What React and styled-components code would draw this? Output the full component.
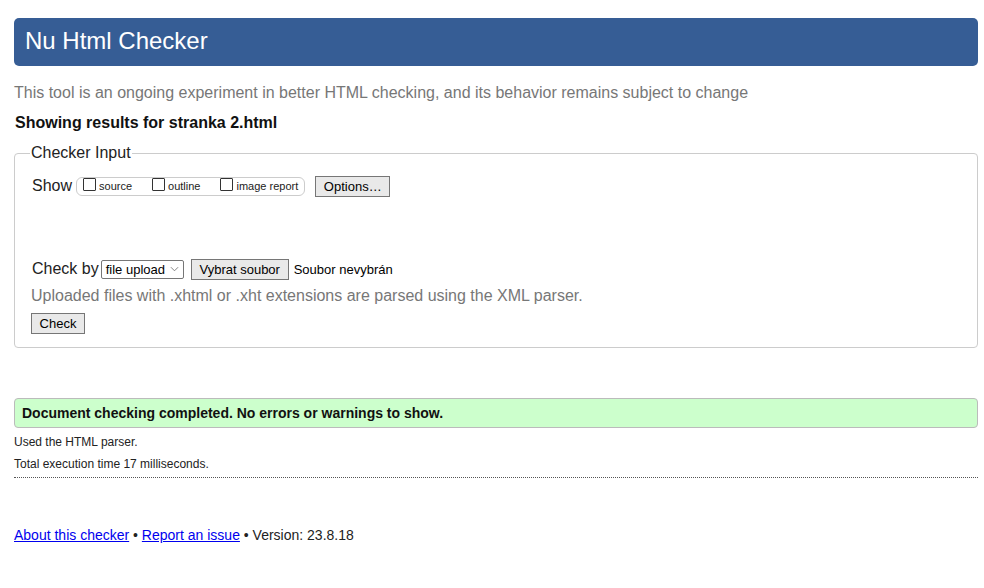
import React from "react";
import styled, { createGlobalStyle } from "styled-components";

const GlobalStyle = createGlobalStyle`
  body {
    margin: 0;
    background: #fff;
    font-family: "Liberation Sans", Arial, sans-serif;
    color: #000;
  }
`;

function App() {
  return (
    <Page>
      <GlobalStyle />
      <Header>
        <Title>Nu Html Checker</Title>
      </Header>
      <Intro>
        This tool is an ongoing experiment in better HTML checking, and its
        behavior remains subject to change
      </Intro>
      <ResultsFor>Showing results for stranka 2.html</ResultsFor>
      <Fieldset>
        <Legend>Checker Input</Legend>
        <Row>
          <RowLabel $mr={4}>Show</RowLabel>
          <CheckGroup>
            <CheckItem $gap={20}>
              <Box />
              source
            </CheckItem>
            <CheckItem $gap={20}>
              <Box />
              outline
            </CheckItem>
            <CheckItem $gap={6}>
              <Box />
              image report
            </CheckItem>
          </CheckGroup>
          <Button $w={75}>Options…</Button>
        </Row>
        <CheckByRow>
          <RowLabel $mr={2}>Check by</RowLabel>
          <Select>
            file upload
            <Chevron viewBox="0 0 10 6" width="9" height="6">
              <path d="M1 1 L5 5 L9 1" fill="none" stroke="#767676" strokeWidth="1" />
            </Chevron>
          </Select>
          <Button $w={98} $ml={7}>Vybrat soubor</Button>
          <FileName>Soubor nevybrán</FileName>
        </CheckByRow>
        <Hint>Uploaded files with .xhtml or .xht extensions are parsed using the XML parser.</Hint>
        <Button $w={54}>Check</Button>
      </Fieldset>
      <Success>Document checking completed. No errors or warnings to show.</Success>
      <Small $top={3}>Used the HTML parser.</Small>
      <Small>Total execution time 17 milliseconds.</Small>
      <Divider />
      <Footer>
        <Link href="#">About this checker</Link> • <Link href="#">Report an issue</Link> •
        Version: 23.8.18
      </Footer>
    </Page>
  );
}

export default App;

const Page = styled.div`
  padding: 18px 6px 0 14px;
  width: 964px;
`;

const Header = styled.div`
  background: #365d95;
  border-radius: 5px;
  height: 48px;
  display: flex;
  align-items: center;
  padding-left: 11px;
`;

const Title = styled.h1`
  margin: 0;
  color: #fff;
  font-weight: normal;
  font-size: 24px;
  line-height: 1;
  position: relative;
  top: -1px;
`;

const Intro = styled.p`
  margin: 17px 0 0;
  color: #777;
  font-size: 16px;
  line-height: 20px;
`;

const ResultsFor = styled.h2`
  margin: 10px 0 0 1px;
  font-size: 16px;
  font-weight: bold;
  line-height: 20px;
  color: #111;
`;

const Fieldset = styled.fieldset`
  margin: 11px 0 0;
  border: 1px solid #ccc;
  border-radius: 4px;
  padding: 13px 16px 13px 16px;
  min-width: 0;
`;

const Legend = styled.legend`
  font-size: 16px;
  color: #222;
  padding: 0 1px;
  margin-left: -1px;
`;

const Row = styled.div`
  display: flex;
  align-items: center;
  height: 22px;
`;

const CheckByRow = styled(Row)`
  margin-top: 61px;
`;

const RowLabel = styled.span`
  font-size: 16px;
  color: #222;
  padding-left: 1px;
  margin-right: ${(p) => p.$mr}px;
`;

const CheckGroup = styled.div`
  display: flex;
  align-items: center;
  height: 17px;
  border: 1px solid #ccc;
  border-radius: 6px;
  padding: 0 0 0 6px;
  margin-right: 10px;
`;

const CheckItem = styled.label`
  display: flex;
  align-items: center;
  font-size: 11px;
  color: #222;
  margin-right: ${(p) => p.$gap}px;
`;

const Box = styled.span`
  width: 11px;
  height: 11px;
  border: 1px solid #333;
  border-radius: 1px;
  margin-right: 3px;
  position: relative;
  top: -2px;
`;

const Button = styled.button`
  width: ${(p) => p.$w}px;
  margin-left: ${(p) => p.$ml || 0}px;
  height: 21px;
  padding: 0;
  border: 1px solid #767676;
  background: #e9e9e9;
  border-radius: 0;
  font-family: "Liberation Sans", Arial, sans-serif;
  font-size: 13px;
  color: #000;
`;

const Select = styled.div`
  display: flex;
  align-items: center;
  justify-content: space-between;
  box-sizing: border-box;
  width: 83px;
  height: 19px;
  border: 1px solid #767676;
  border-radius: 2px;
  padding: 0 4px 0 4px;
  font-size: 13px;
  color: #000;
`;

const Chevron = styled.svg`
  display: block;
`;

const FileName = styled.span`
  font-size: 13px;
  margin-left: 5px;
  color: #000;
`;

const Hint = styled.p`
  margin: 6px 0 7px;
  color: #777;
  font-size: 16px;
  line-height: 20px;
`;

const Success = styled.div`
  margin-top: 50px;
  height: 30px;
  box-sizing: border-box;
  background: #ccffcc;
  border: 1px solid #bbb;
  border-radius: 4px;
  padding: 0 7px;
  display: flex;
  align-items: center;
  font-size: 14px;
  font-weight: bold;
  color: #111;
`;

const Small = styled.p`
  margin: ${(p) => p.$top || 0}px 0 0;
  font-size: 12px;
  line-height: 22px;
  color: #222;
`;

const Divider = styled.hr`
  margin: 2px 0 0;
  border: 0;
  border-top: 1px dotted #555;
`;

const Footer = styled.p`
  margin: 49px 0 0;
  font-size: 14px;
  color: #222;
`;

const Link = styled.a`
  color: #0000ee;
`;
